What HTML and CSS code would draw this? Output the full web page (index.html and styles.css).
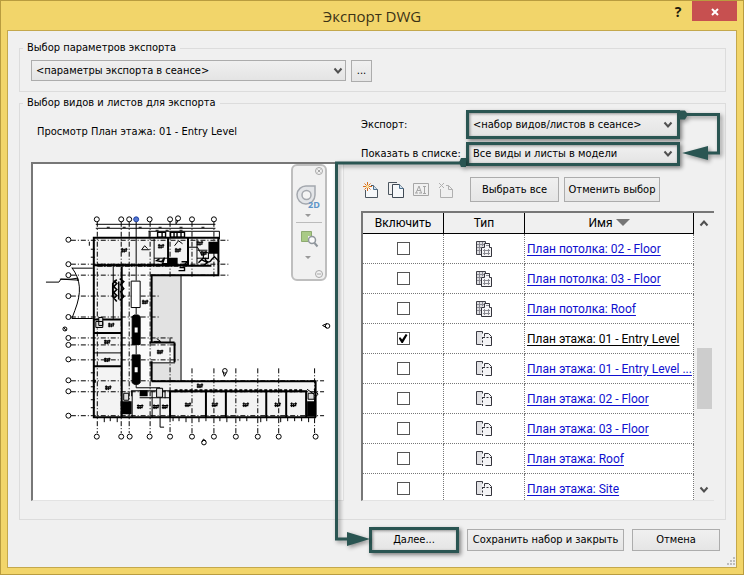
FILE: index.html
```html
<!DOCTYPE html>
<html lang="ru">
<head>
<meta charset="utf-8">
<title>Экспорт DWG</title>
<link rel="stylesheet" href="styles.css">
</head>
<body>
<svg class="defs" aria-hidden="true">
  <symbol id="chevron" viewBox="0 0 10 8"><path d="M1.5 1.5 5 5.5 8.500 1.500" fill="none" stroke="#505050" stroke-width="2"/></symbol>
  <symbol id="ceiling" viewBox="0 0 16 16">
    <path d="M.5.500h9v13h-9z" fill="#dedee2" stroke="#3c3c44"/>
    <path d="M1 3.500h8M1 6.500h4M1 9.500h4M3.500 1v12M6.500 1v4" stroke="#8a8a92" fill="none"/>
    <path d="M5.500 6.500h3v-4h5v4h2v9h-10z" fill="#f4f4f6" stroke="#33333b"/>
    <path d="M7 9.500h7M7 12.500h7M8.500 8v6M12.500 8v6M10 4.500h3" stroke="#8a8a92" fill="none"/>
  </symbol>
  <symbol id="floor" viewBox="0 0 16 16">
    <path d="M6.500.5h-6v13h5" fill="#e2e2e5" stroke="#3c3c44"/>
    <path d="M6 3h6l3.500 3.500v8H6z" fill="#f4f4f6"/>
    <path d="M6.500.5v2M8.500 5.500v-3h4l3 3v9h-6" stroke="#33333b" fill="none"/>
    <path d="M6.500 6v9M7 6.500h8" stroke="#33333b" stroke-dasharray="2 1.500" fill="none"/>
  </symbol>
  <symbol id="room" viewBox="0 0 7 5"><path d="M0 1.500h7M0 3.500h6M1.500 0v5M3.500 1v4M5.500 0v4" stroke="#000" fill="none"/></symbol>
</svg>
<main class="dialog">
  <header class="titlebar">
    <h1>Экспорт DWG</h1>
    <button class="help" type="button" aria-label="Справка">?</button>
    <button class="close" type="button" aria-label="Закрыть"><svg viewBox="0 0 8 8"><path d="M1 1l6 6M7 1L1 7" stroke="#fff" stroke-width="2"/></svg></button>
  </header>
  <form class="client">
    <fieldset class="options">
      <legend>Выбор параметров экспорта</legend>
      <span class="combo"><select aria-label="Параметры экспорта"><option>&lt;параметры экспорта в сеансе&gt;</option></select><svg><use href="#chevron"/></svg></span>
      <button class="btn more" type="button">...</button>
    </fieldset>
    <fieldset class="views">
      <legend>Выбор видов и листов для экспорта</legend>
      <section class="left">
        <p>Просмотр План этажа: 01 - Entry Level</p>
        <div class="preview">
          <svg class="plan" viewBox="33 164 311 336" preserveAspectRatio="xMinYMin meet" fill="none" stroke="#000">
            <path d="M94 239h125v36h-67v107h165v36H94z" fill="#f3f3f3" stroke="none"/>
            <path d="M152 275h30v107h-30z" fill="#e2e2e2" stroke="none"/>
            <path d="M123 267h28v115h-28z" fill="#fafafa" stroke="none"/>
            <path d="M152 343h23v20h-23z" fill="#f6f6f6" stroke="none"/>
            <g stroke-dasharray="5 2 1 2">
              <path d="M97.500 222v212M121.500 222v212M129.500 222v212M150.500 222v212M170.500 222v55M170.500 338v96M192.500 222v55M214.500 222v55M192.500 369v65M214.500 369v65M236.500 369v65M258.500 369v65M279.500 369v65M315.500 369v65"/>
              <path d="M71 240.500h160M71 264.500h160M71 275.500h160M71 296.500h90M71 317.500h90M71 338.500h102M71 345.500h107M71 360.500h109M71 381.500h254M71 392.500h254M71 416.500h254"/>
            </g>
            <g fill="#fff">
              <circle cx="97" cy="219.500" r="2.500"/><circle cx="121.500" cy="219.500" r="2.500"/><circle cx="129.500" cy="219.500" r="2.500"/><circle cx="150" cy="219.500" r="2.500"/><circle cx="170.500" cy="219.500" r="2.500"/><circle cx="178.500" cy="218.500" r="2.500"/><circle cx="192.500" cy="219.500" r="2.500"/><circle cx="214.500" cy="219.500" r="2.500"/>
              <circle cx="68.500" cy="240" r="2.500"/><circle cx="68.500" cy="264.500" r="2.500"/><circle cx="68.500" cy="275.500" r="2.500"/><circle cx="68.500" cy="296.500" r="2.500"/><circle cx="68.500" cy="317.500" r="2.500"/><circle cx="68.500" cy="338.500" r="2.500"/><circle cx="68.500" cy="345.500" r="2.500"/><circle cx="68.500" cy="360" r="2.500"/><circle cx="68.500" cy="381" r="2.500"/><circle cx="68.500" cy="392" r="2.500"/><circle cx="68.500" cy="416.500" r="2.500"/>
              <circle cx="97" cy="437.500" r="2.500"/><circle cx="121.500" cy="437.500" r="2.500"/><circle cx="130" cy="437.500" r="2.500"/><circle cx="150" cy="437.500" r="2.500"/><circle cx="170.500" cy="437.500" r="2.500"/><circle cx="192.500" cy="437.500" r="2.500"/><circle cx="214.500" cy="437.500" r="2.500"/><circle cx="236.500" cy="437.500" r="2.500"/><circle cx="258.500" cy="437.500" r="2.500"/><circle cx="279.500" cy="437.500" r="2.500"/><circle cx="316.500" cy="437.500" r="2.500"/>
            </g>
            <circle cx="136.500" cy="219.500" r="2.500" fill="#5577d0" stroke="#1c3fa8"/>
            <path d="M176.500 220v4l2-3"/>
            <path d="M96 224.500h120M96 228.500h120M149 231.500h71v8M136.500 222v59M149.500 231v7"/>
            <path d="M107 227.500h3M123 227.500h3M139 227.500h3M159 227.500h3M180 227.500h3M202 227.500h3M156 230.500h3M166 230.500h3M180 230.500h3"/>
            <path d="M158 232.500h8v5h-8zM162.500 232v6M171 232.500h14v5h-14zM174.500 232v6M177.500 232v6M181.500 232v6" stroke-width="1.400"/>
            <path d="M93 238h126v37.500H151M94 238v180h223M94 265.500h94M188 266h24" stroke-width="2"/>
            <path d="M98 265.500h37M138 265.500h50" stroke-width="3" stroke-dasharray="5 1 2 1"/>
            <path d="M168.500 238v28M188.500 238v28M152 275v69M152 362v20M152 382h164.500v36M170.500 392H308M170.500 391v27M122 267v151M94 320h28M94 333.500h28M94 367h28M175 343v20M150 343h25" stroke-width="2"/>
            <path d="M93 382h3M175 391.500h130" stroke-width="3" stroke-dasharray="3 2"/>
            <path d="M154.500 239v26M154.500 258.500h14M113.500 267v53M181.500 275v107M94 353.500h28M175.500 363.500H150M197.500 239v26M188 247.500h10l5 9M198 250.500h10M197.500 258.500h12M204 253h5v6h-5zM132 391.500h38M132.500 392v26M152.500 392v26M160.500 389v39h4M165.500 391v8M140 398.500h30M132 397v-6M136.500 308v7M136.500 345v10M136.500 384v4.500h24"/>
            <path d="M206.500 392v26M226.500 392v26M267 392v26M287 392v26M307 392v26" stroke-width="2"/>
            <path d="M131.500 281.500h9V308h-9z" fill="#fff"/>
            <path d="M132.500 317l2-1.500h4l2 1.500v28h-8zM132.500 355.500h8v28l-2 1.500h-4l-2-1.500z" fill="#000"/>
            <path d="M135 328h3v5h-3zM135 368h3v5h-3z" fill="#fff" stroke="none"/>
            <path d="M209 242h10v12h-10zM121 402h11v13h-11zM308 402h9v15h-9zM140 391h8v6h-8zM169 258h9v7h-9z" fill="#000" stroke="none"/>
            <path d="M309 394h6v6h-6zM124 394h5v7h-5zM99 318h4v8h-4zM96 322h7v6h-7zM157 389h6v9h-6z" fill="#ddd"/>
            <path d="M308 390l7 5M315 390l4 5-4 4M183 244l-4 -3-4 5M148 249l-3-3-3 4h8M157 339l4 3h-7"/>
            <path d="M117 280l-4 4v13l4 5M120 279l4 3-3 3 3 4-3 3 3 5-4 4M114 281l3 3-3 3 3 3-3 3 3 3-3 3M119 282v18" stroke-width="1.600"/>
            <path d="M160 259l-3 2 5 1 3-4-2 6h5M171 259h6v5M206 258a3 3 0 1 0 6 2l3-3 5 5M202 260l6 3-4 3M199 263l5-5M180 268h5v3h-6M182 262h6l-4 4h4" stroke-width="1.400"/>
            <path d="M72 268.500h21M72 268c9 12 10 25 3 43l-3 8h21M46 282.500h13l2-3h10l7-1v3M60 279.500l19 1"/>
            <path d="M89.500 242v4M91 249.500h4M91 257.500h4M91 373.500h4M91 387.500h4M91 400.500h4M91 408.500h4M104.500 418v5M110.500 418v4M117.500 418v5M173.500 418v4M179.500 418v4M186.500 418v5M199.500 418v5M206.500 418v4M220.500 418v4M227.500 418v5M240.500 418v4M247.500 418v4M261.500 418v5M267.500 418v4M281.500 418v5M288.500 418v4M295.500 418v4M302.500 418v4M309.500 418v5"/>
            <g stroke-width="1.200">
              <use href="#room" x="121" y="248" width="7" height="5"/><use href="#room" x="158" y="244" width="7" height="5"/><use href="#room" x="175" y="248" width="7" height="5"/><use href="#room" x="197" y="241" width="7" height="5"/><use href="#room" x="201" y="251" width="7" height="5"/>
              <use href="#room" x="142" y="300" width="7" height="5"/><use href="#room" x="108" y="323" width="7" height="5"/><use href="#room" x="104" y="340" width="7" height="5"/><use href="#room" x="104" y="358" width="7" height="5"/><use href="#room" x="105" y="386" width="7" height="5"/><use href="#room" x="157" y="350" width="7" height="5"/>
              <use href="#room" x="137" y="405" width="7" height="5"/><use href="#room" x="153" y="405" width="7" height="5"/><use href="#room" x="162" y="405" width="7" height="5"/><use href="#room" x="185" y="403" width="7" height="5"/><use href="#room" x="212" y="403" width="7" height="5"/><use href="#room" x="243" y="403" width="7" height="5"/><use href="#room" x="275" y="403" width="7" height="5"/><use href="#room" x="291" y="403" width="7" height="5"/><use href="#room" x="197" y="384" width="7" height="5"/>
            </g>
            <circle cx="65" cy="329.500" r="2"/><path d="M63.500 327.500l3 4"/><circle cx="225.500" cy="371.500" r="2.300"/><path d="M223.500 372l1.500 5 2-3.500"/><circle cx="328.500" cy="326.500" r="2.300"/><path d="M328 324l-4.500 2 4.500 2.500"/><circle cx="204.500" cy="443.500" r="2.300"/><path d="M202.500 443l1.500-3 2.500 2"/>
          </svg>
          <svg class="navbar" viewBox="0 0 37 118" fill="none">
            <rect x="1" y="1" width="34" height="115" rx="5" fill="#f1f1f1" stroke="#bebebe" stroke-width="2"/>
            <circle cx="28" cy="7" r="3.500" stroke="#a8a8a8"/><path d="M26.500 5.500l3 3M29.500 5.500l-3 3" stroke="#a8a8a8"/>
            <path d="M15.500 22H24v9a9 9 0 1 1-8.500-9z" fill="#e3e5e8" stroke="#a4a8ae" stroke-width="1.500"/><circle cx="15.500" cy="31" r="4.500" fill="#f4f4f4" stroke="#a4a8ae" stroke-width="1.500"/>
            <text x="17" y="44" class="two-d">2D</text>
            <path d="M14 50h6l-3 3zM14 92h6l-3 3z" fill="#999"/><path d="M5 58.500h26" stroke="#bbb"/>
            <path d="M10.500 67.500h10v10h-10z" fill="#a9ca86" stroke="#8daa70"/><path d="M17 72h8v7h-8z" fill="#f1f1f1"/><circle cx="21" cy="76" r="3.500" stroke="#8f969c" stroke-width="1.500" fill="#fafafa"/><path d="M23.500 79l3 3.500" stroke="#8f969c" stroke-width="2"/>
            <circle cx="28" cy="110" r="3.500" stroke="#a8a8a8"/><path d="M26 110h4" stroke="#a8a8a8"/>
          </svg>
        </div>
      </section>
      <section class="right">
        <div class="field">
          <label for="set">Экспорт:</label>
          <span class="combo marked tall"><select id="set"><option>&lt;набор видов/листов в сеансе&gt;</option></select><svg><use href="#chevron"/></svg></span>
        </div>
        <div class="field">
          <label for="list">Показать в списке:</label>
          <span class="combo marked"><select id="list"><option>Все виды и листы в модели</option></select><svg><use href="#chevron"/></svg></span>
        </div>
        <div class="toolbar">
          <button class="icon" type="button" aria-label="Новый набор"><svg viewBox="0 0 16 16" fill="none"><path d="M2.500 8v7.500h12v-8l-4-4H8" fill="#f6f8fa" stroke="#4c5660"/><path d="M10.500 3.500v4h4" fill="#cfe0ee" stroke="#4c6f8c"/><path d="M4.500 0v9M0 4.500h9M1.500 1.500l6 6M7.500 1.500l-6 6" stroke="#d8701e"/><circle cx="4.500" cy="4.500" r="1.500" fill="#ffe9a8"/></svg></button>
          <button class="icon" type="button" aria-label="Копировать набор"><svg viewBox="0 0 16 16" fill="none"><path d="M9 .5H.5v12H4" stroke="#4c5660"/><path d="M4.500 2.500h7l4 4v9h-11z" fill="#f6f8fa" stroke="#3f4954"/><path d="M11.500 2.500v4h4" fill="#cfe0ee" stroke="#4c6f8c"/></svg></button>
          <button class="icon" type="button" aria-label="Переименовать" disabled><svg viewBox="0 0 16 16" fill="none" stroke="#a6a6a6"><path d="M.5 1.500h15v12H.5z"/><path d="M2 11h3M6 11h3M3 11l3-7 2.500 7M4 8.500h4M10 4.500h3M10 11.500h3M11.500 4.500v7"/></svg></button>
          <button class="icon" type="button" aria-label="Удалить набор" disabled><svg viewBox="0 0 16 16" fill="none" stroke="#b0b0b0"><path d="M2.500 7v8.500h12v-8l-4-4H8M10.500 3.500v4h4M1 1l5 5M6 1L1 6" /></svg></button>
          <button class="btn all" type="button">Выбрать все</button>
          <button class="btn none" type="button">Отменить выбор</button>
        </div>
        <div class="grid">
          <table>
            <thead><tr><th class="c1">Включить</th><th class="c2">Тип</th><th>Имя <svg class="sort" viewBox="0 0 14 7"><path d="M0 0h14L7 7z" fill="#767676"/></svg></th></tr></thead>
            <tbody>
              <tr><td><input type="checkbox" aria-label="План потолка: 02 - Floor"></td><td><svg class="type"><use href="#ceiling"/></svg></td><td><a href="#">План потолка: 02 - Floor</a></td></tr>
              <tr><td><input type="checkbox" aria-label="План потолка: 03 - Floor"></td><td><svg class="type"><use href="#ceiling"/></svg></td><td><a href="#">План потолка: 03 - Floor</a></td></tr>
              <tr><td><input type="checkbox" aria-label="План потолка: Roof"></td><td><svg class="type"><use href="#ceiling"/></svg></td><td><a href="#">План потолка: Roof</a></td></tr>
              <tr><td><input type="checkbox" aria-label="План этажа: 01 - Entry Level" checked></td><td><svg class="type"><use href="#floor"/></svg></td><td><a class="current" href="#">План этажа: 01 - Entry Level</a></td></tr>
              <tr><td><input type="checkbox" aria-label="План этажа: 01 - Entry Level ..."></td><td><svg class="type"><use href="#floor"/></svg></td><td><a href="#">План этажа: 01 - Entry Level ...</a></td></tr>
              <tr><td><input type="checkbox" aria-label="План этажа: 02 - Floor"></td><td><svg class="type"><use href="#floor"/></svg></td><td><a href="#">План этажа: 02 - Floor</a></td></tr>
              <tr><td><input type="checkbox" aria-label="План этажа: 03 - Floor"></td><td><svg class="type"><use href="#floor"/></svg></td><td><a href="#">План этажа: 03 - Floor</a></td></tr>
              <tr><td><input type="checkbox" aria-label="План этажа: Roof"></td><td><svg class="type"><use href="#floor"/></svg></td><td><a href="#">План этажа: Roof</a></td></tr>
              <tr><td><input type="checkbox" aria-label="План этажа: Site"></td><td><svg class="type"><use href="#floor"/></svg></td><td><a href="#">План этажа: Site</a></td></tr>
            </tbody>
          </table>
          <div class="scrollbar"><svg class="up"><use href="#chevron"/></svg><span class="track"><i></i></span><svg><use href="#chevron"/></svg></div>
        </div>
      </section>
    </fieldset>
    <footer>
      <button class="btn next" type="button">Далее...</button>
      <button class="btn save" type="button">Сохранить набор и закрыть</button>
      <button class="btn cancel" type="button">Отмена</button>
    </footer>
    <svg class="grip" viewBox="0 0 9 9"><path d="M6 0h2v2H6zM3 3h2v2H3zM6 3h2v2H6zM0 6h2v2H0zM3 6h2v2H3zM6 6h2v2H6z" fill="#bdbdbd"/></svg>
  </form>
  <svg class="arrows" viewBox="330 100 414 460" fill="none" stroke="#2a5552" stroke-width="3">
    <path d="M683 114.500h35.500V153H706"/>
    <path d="M679 110.500h6l3 4-3 5h-6zM682 153l26-7v14zM466 158h-5l-2 4.500 2 4.500h5zM370 539l-23-7v14z" fill="#2a5552" stroke="none"/>
    <path d="M463 163H336.500v376H348"/>
  </svg>
</main>
</body>
</html>
```
FILE: styles.css
```css
* { box-sizing: border-box; }
body {
  margin: 0;
  font: 11px/14px "DejaVu Sans Condensed", "Noto Sans", sans-serif;
  color: #000;
}
svg { display: block; }
.defs { position: absolute; width: 0; height: 0; }
button, select { font: inherit; color: inherit; }
p { margin: 0; }

.dialog {
  position: relative;
  display: flex;
  flex-direction: column;
  min-height: 100vh;
  padding: 0 6px 6px;
  background: #f2d56a;
  border: 1px solid #b99c3f;
}

.titlebar {
  display: grid;
  grid-template-columns: 1fr auto 1fr;
  align-items: start;
  height: 29px;
  position: relative;
}
.titlebar h1 {
  grid-column: 2;
  margin: 0;
  font: 15px/30px "Open Sans", "Noto Sans", sans-serif;
  color: #3a3216;
}
.titlebar button { position: absolute; top: 0; border: 0; padding: 0; }
.titlebar .help {
  right: 52px;
  width: 14px;
  background: none;
  font: bold 14px/22px "Open Sans", sans-serif;
  color: #1e1a0c;
}
.close { right: 0; width: 45px; height: 20px; background: #c75050; }
.close svg { width: 8px; height: 8px; margin: 2px auto 0; }

.client {
  position: relative;
  flex: 1;
  display: flex;
  flex-direction: column;
  padding: 10px 10px 0 11px;
  background: #f0f0f0;
  border: 1px solid #c4a84c;
}
fieldset {
  min-width: 0;
  margin: 0;
  padding: 5px 11px 9px;
  border: 1px solid #dcdcdc;
}
legend { padding: 0 4px; margin-left: -8px; }
.options { display: flex; gap: 5px; }
.options .combo { width: 315px; height: 21px; }
.views {
  flex: 1;
  display: grid;
  grid-template-columns: 1fr 353px;
  column-gap: 17px;
  margin-top: 4px;
  padding: 0 11px 17px;
}

.combo { position: relative; display: block; }
.combo select {
  width: 100%;
  height: 100%;
  padding: 0 4px;
  appearance: none;
  border: 1px solid #acacac;
  border-radius: 0;
  background: linear-gradient(#f0f0f0, #e4e4e4);
}
.combo svg {
  position: absolute;
  right: 3px;
  top: calc(50% - 4px);
  width: 10px;
  height: 8px;
  pointer-events: none;
}
.marked { width: 214px; height: 24px; }
.marked.tall { height: 29px; }
.marked select { border: 3px solid #2a5552; padding: 0 4px; box-shadow: 2px 2px 4px #0007, inset 1px 1px 3px #0006; }
.marked svg { right: 7px; }

.btn {
  height: 22px;
  padding: 0;
  border: 1px solid #acacac;
  background: linear-gradient(#f0f0f0, #e5e5e5);
  text-align: center;
  white-space: nowrap;
}
.more { width: 21px; }

.left { display: flex; flex-direction: column; }
.left p { height: 52px; padding: 15px 6px 0; }
.preview {
  flex: 1;
  position: relative;
  background: #fff;
  border: 1px solid #e3e3e3;
  border-top: 2px solid #777;
  border-left: 2px solid #777;
}
.plan { position: absolute; inset: 0; width: 100%; height: 100%; }
.navbar { position: absolute; right: 15px; top: 0; width: 37px; height: 118px; }
.two-d { font: bold 9px "Open Sans", sans-serif; fill: #5c94c8; }

.right { display: flex; flex-direction: column; }
.field { display: flex; align-items: center; justify-content: space-between; margin-bottom: 3px; padding-right: 34px; }
.toolbar { display: flex; align-items: center; margin-top: 8px; gap: 5px; }
.icon { width: 20px; height: 20px; padding: 2px; border: 0; background: none; }
.icon svg { width: 16px; height: 16px; }
.toolbar .btn { height: 25px; }
.all { width: 89px; margin-left: 9px; }
.none { width: 96px; }

.grid {
  display: flex;
  height: 290px;
  margin-top: 9px;
  overflow: hidden;
  background: #fff;
  border-top: 2px solid #777;
  border-left: 2px solid #777;
  border-bottom: 1px solid #e3e3e3;
}
table {
  flex: 1;
  width: 100%;
  table-layout: fixed;
  border-collapse: separate;
  border-spacing: 0;
  align-self: flex-start;
  font: 12px/16px Roboto, "Noto Sans", sans-serif;
}
th {
  height: 21px;
  padding: 0;
  font-weight: normal;
  background: #f0f0f0;
  border-right: 1px solid #000;
  border-bottom: 1px solid #000;
}
.c1, .c2 { width: 81px; }
td {
  height: 30px;
  padding: 0 2px;
  border-right: 1px dotted #777;
  border-bottom: 1px dotted #777;
  white-space: nowrap;
}
.sort { display: inline-block; width: 14px; height: 7px; vertical-align: 1px; }
a { color: #1010d0; text-underline-offset: 2px; }
a.current { color: #000; }
.type { width: 16px; height: 16px; margin: 0 auto; }
input[type="checkbox"] {
  display: grid;
  place-content: center;
  width: 13px;
  height: 13px;
  margin: 0 auto;
  appearance: none;
  border: 1px solid #555;
  background: #fff;
}
input:checked::before {
  content: "";
  width: 9px;
  height: 9px;
  background: #000;
  clip-path: polygon(0 45%, 20% 35%, 40% 62%, 80% 0, 100% 10%, 48% 100%, 34% 100%);
}
.scrollbar {
  display: flex;
  flex: none;
  flex-direction: column;
  align-items: center;
  width: 20px;
  padding: 6px 1px;
  background: #f0f0f0;
}
.scrollbar svg { width: 10px; height: 8px; }
.scrollbar .up { transform: rotate(180deg); }
.track { flex: 1; width: 15px; padding-top: 121px; }
.track i { display: block; height: 61px; background: #cdcdcd; }

footer {
  display: flex;
  align-items: center;
  justify-content: flex-end;
  gap: 8px;
  padding: 7px 6px 14px 0;
}
.next { width: 90px; height: 26px; border: 3px solid #2a5552; box-shadow: 2px 2px 4px #0007, inset 1px 1px 3px #0006; }
.save { width: 157px; }
.cancel { width: 88px; }
.grip { position: absolute; right: 0; bottom: 1px; width: 9px; height: 9px; }
.arrows {
  position: absolute;
  top: 99px;
  right: -1px;
  width: 414px;
  height: 460px;
  pointer-events: none;
  filter: drop-shadow(2px 2px 2px #0006);
}
```
